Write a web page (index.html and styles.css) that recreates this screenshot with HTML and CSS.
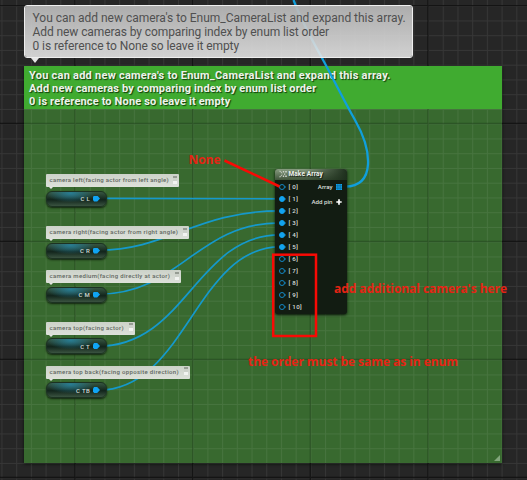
FILE: index.html
```html
<!DOCTYPE html>
<html lang="en">
<head>
<meta charset="utf-8">
<title>Make Array graph</title>
<link rel="stylesheet" href="styles.css">
</head>
<body>
<main class="graph">
  <section class="comment">
    <header class="comment-title">You can add new camera's to Enum_CameraList and expand this array.<br><span class="tight">Add new cameras by comparing index by enum list order<br>0 is reference to None so leave it empty</span></header>
    <i class="resize"></i>
  </section>

  <svg class="layer" viewBox="0 0 527 480">
    <defs>
      <pattern id="minor" x="1.45" y="5.7" width="14.71" height="14.75" patternUnits="userSpaceOnUse"><path d="M.5 0V14.75M0 .5H14.71" class="minor"/></pattern>
    </defs>
    <path fill="url(#minor)" d="M0 0H527V66H0zM0 66H24V109H0zM502 66H527V109H502zM0 109H527V480H0z"/>
    <path class="major" d="M75 0V66M75 463V480M192.700 0V66M192.700 463V480M310.300 0V66M310.300 463V480M428 0V66M428 463V480M0 5.700H527M0 123.500H24M502 123.500H527M0 241.500H24M502 241.500H527M0 359.500H24M502 359.500H527M0 477.500H527"/>
    <path class="major faint" d="M75 109V463M192.700 109V463M310.300 109V463M428 109V463M24 123.500H502M24 241.500H502M24 359.500H502"/>
    <g class="wires">
      <path d="M98 198.300C160 198.300 220 198.800 280 198.800"/>
      <path d="M98 250.200C168 250.200 196 210.900 280 210.900"/>
      <path d="M98 294.200C180 294.200 196 222.900 280 222.900"/>
      <path d="M98 346.200C186 346.200 196 234.900 280 234.900"/>
      <path d="M98 390.200C186 390.200 196 246.900 280 246.900"/>
      <path class="thick" d="M293.500 0C302 22 312 40 322 58C334 80 343 99 355 120C372 150 376 186 345 186.700"/>
    </g>
  </svg>

  <div class="bubble big">You can add new camera's to Enum_CameraList and expand this array.<br><span class="tight">Add new cameras by comparing index by enum list order<br>0 is reference to None so leave it empty</span></div>

  <div class="variable n1"><div class="bubble small"><span>camera left(facing actor from left angle)</span><i class="pinbox"></i></div><div class="pill">C L<i class="out"></i></div></div>
  <div class="variable n2"><div class="bubble small"><span>camera right(facing actor from right angle)</span><i class="pinbox"></i></div><div class="pill">C R<i class="out"></i></div></div>
  <div class="variable n3"><div class="bubble small"><span>camera medium(facing directly at actor)</span><i class="pinbox"></i></div><div class="pill">C M<i class="out"></i></div></div>
  <div class="variable n4"><div class="bubble small"><span>camera top(facing actor)</span><i class="pinbox"></i></div><div class="pill">C T<i class="out"></i></div></div>
  <div class="variable n5"><div class="bubble small"><span>camera top back(facing opposite direction)</span><i class="pinbox"></i></div><div class="pill">C TB<i class="out"></i></div></div>

  <section class="array">
    <header class="array-title">
      <svg width="8" height="8" viewBox="0 0 8 8"><path d="M.3 1.200H1.500L3 3.500M.3 6.800H1.500L3 4.500" fill="none" stroke="#ccd3ca" stroke-width=".9"/><path d="M3.800 1H5.200V2.400H3.800zM6.200 1H7.800V2.400H6.200zM3.800 5.600H5.200V7H3.800zM6.200 5.600H7.800V7H6.200zM5 3.400H6.300V4.700H5z" fill="#ccd3ca"/></svg>
      <span>Make Array</span>
    </header>
    <div class="array-body">
      <ul class="pins">
        <li><i class="pin"></i>[ 0]</li>
        <li><i class="pin on"></i>[ 1]</li>
        <li><i class="pin on"></i>[ 2]</li>
        <li><i class="pin on"></i>[ 3]</li>
        <li><i class="pin on"></i>[ 4]</li>
        <li><i class="pin on"></i>[ 5]</li>
        <li><i class="pin"></i>[ 6]</li>
        <li><i class="pin"></i>[ 7]</li>
        <li><i class="pin"></i>[ 8]</li>
        <li><i class="pin"></i>[ 9]</li>
        <li><i class="pin"></i>[ 10]</li>
      </ul>
      <div class="outputs">
        <div class="output">Array<svg width="6" height="6" viewBox="0 0 6 6"><rect width="6" height="6" fill="#0b6391"/><path d="M0 0H1.600V1.600H0zM2.200 0H3.800V1.600H2.200zM4.400 0H6V1.600H4.400zM0 2.200H1.600V3.800H0zM2.200 2.200H3.800V3.800H2.200zM4.400 2.200H6V3.800H4.400zM0 4.400H1.600V6H0zM2.200 4.400H3.800V6H2.200zM4.400 4.400H6V6H4.400z" fill="#0fa4ee"/></svg></div>
        <div class="output">Add pin<svg width="6" height="6" viewBox="0 0 6 6"><path d="M3 .3V5.700M.3 3H5.700" stroke="#fff" stroke-width="1.700"/></svg></div>
      </div>
    </div>
  </section>

  <svg class="layer marks" viewBox="0 0 527 480">
    <path d="M224.500 160.500L279.500 186.500"/>
    <rect x="273.200" y="254.700" width="42.800" height="81.300"/>
  </svg>
  <div class="note none">None</div>
  <div class="note extra">add additional camera's here</div>
  <div class="note order">the order must be same as in enum</div>
</main>
</body>
</html>
```
FILE: styles.css
```css
* { box-sizing: border-box; }
body { margin: 0; background: #262626; }
.graph { position: relative; width: 527px; height: 480px; overflow: hidden; background: #262626; font-family: Roboto, "Liberation Sans", sans-serif; }
.layer { position: absolute; left: 0; top: 0; width: 527px; height: 480px; }
.minor { fill: none; stroke: #fff; stroke-opacity: .075; stroke-width: 1; }
.major { fill: none; stroke: #080808; stroke-opacity: .65; stroke-width: 1.3; }
.faint { stroke: #12300f; stroke-opacity: .38; }
.wires { fill: none; stroke: #1599cb; stroke-width: 1.7; }
.thick { stroke: #109fdc; stroke-width: 2.3; }

.comment { position: absolute; left: 24px; top: 66px; width: 478px; height: 397px; background: #38692f; box-shadow: 0 1px 3px #0a100a; }
.comment-title { height: 43px; padding: 4px 5px; background: #40ab30; color: #eef3eb; font-size: 11px; line-height: 12.8px; font-weight: 700; letter-spacing: .245px; white-space: nowrap; text-shadow: 1px 1px 1px #103c0b; }
.comment-title .tight { letter-spacing: .15px; }
.resize { position: absolute; right: 2px; bottom: 2px; border-left: 6px solid transparent; border-bottom: 6px solid #82a67c; }

.bubble { color: #505050; white-space: nowrap; }
.bubble::after { content: ""; position: absolute; border: solid transparent; border-top-color: #e5e5e5; }
.big { position: absolute; left: 24px; top: 5px; width: 389px; height: 53px; padding: 6px 7.500px; border: 1px solid #eee; border-radius: 3px; background: linear-gradient(rgba(183,183,183,.93), rgba(232,232,232,.88)); background-clip: padding-box; font-size: 12px; line-height: 13.8px; letter-spacing: -.02px; }
.big .tight { letter-spacing: -.085px; }
.big::after { left: 6px; top: 52px; border-width: 5px 4px 0; }

.variable { position: absolute; left: 46px; }
.n1 { top: 174px; } .n2 { top: 226px; } .n3 { top: 270px; } .n4 { top: 321.500px; } .n5 { top: 365.500px; }
.small { position: relative; display: flex; align-items: center; justify-content: space-between; height: 13px; padding: 0 2px 2px 3.500px; border-radius: 1px; background: linear-gradient(#ccd2c9, #dde1da); color: #60665e; font-size: 6px; font-weight: 500; letter-spacing: .33px; }
.small::after { left: 3px; top: 13px; border-width: 2px 2px 0; }
.n1 .small { width: 133px; letter-spacing: .29px; } .n2 .small { width: 142.500px; } .n3 .small { width: 135px; } .n4 .small { width: 88.500px; } .n5 .small { width: 143.500px; }
.pinbox { width: 4px; height: 8px; border-top: 2px solid #969c93; border-bottom: 3px solid #f2f4f1; background: #ccd1c9; }
.pill { display: flex; align-items: center; justify-content: flex-end; gap: 3px; width: 61px; height: 16px; margin-top: 3.500px; padding-right: 6px; border: 1px solid #1c3222; border-radius: 6px; background: radial-gradient(ellipse 24px 9px at 40% 10%, rgba(39,132,161,.85), transparent), linear-gradient(#375641, #12251c 55%, #3a5340); box-shadow: 0 1px 2px #12240f; color: #d5ddd6; font-size: 6px; font-weight: 500; letter-spacing: .3px; }
.out { width: 7px; height: 6px; background: #10a4f3; clip-path: polygon(15% 0, 60% 0, 100% 50%, 60% 100%, 15% 100%, 0 75%, 0 25%); }

.array { position: absolute; left: 274.500px; top: 169px; width: 72px; height: 145px; overflow: hidden; border-radius: 3px; background: #121c12; box-shadow: 0 1px 3px #081008; color: #d8dcd7; }
.array-title { display: flex; align-items: center; gap: 2px; height: 11px; padding: 0 0 1px 4px; background: linear-gradient(90deg, rgba(0,0,0,0) 40%, #1d2f1c), linear-gradient(#879c80, #40543a); color: #eef1ec; font-size: 6.500px; font-weight: 700; letter-spacing: .1px; text-shadow: 1px 1px 1px #101810; }
.array-body { display: flex; justify-content: space-between; padding: 1px 5px 0 4px; font-size: 6.200px; font-weight: 500; }
.pins { margin: 0; padding: 0; list-style: none; letter-spacing: .3px; }
.pins li { display: flex; align-items: center; gap: 4px; height: 12px; }
.pin { position: relative; width: 6px; height: 6px; border: 1px solid #1287c4; border-radius: 50%; }
.pin::after { content: ""; position: absolute; left: 5px; top: 1px; border: solid transparent; border-width: 1px 0 1px 1.500px; border-left-color: #1287c4; }
.pin.on { background: #12a3ef; border-color: #12a3ef; }
.outputs { display: flex; flex-direction: column; align-items: flex-end; gap: 3px; }
.output { display: flex; align-items: center; gap: 3px; height: 12px; white-space: nowrap; }

.marks { fill: none; stroke: #f80a05; stroke-width: 2.500; }
.note { position: absolute; color: #e42414; font: 700 12px/14px "Open Sans", sans-serif; letter-spacing: -.06px; white-space: nowrap; }
.none { left: 188.500px; top: 153px; }
.extra { left: 334px; top: 282px; }
.order { left: 248px; top: 355px; }
```
